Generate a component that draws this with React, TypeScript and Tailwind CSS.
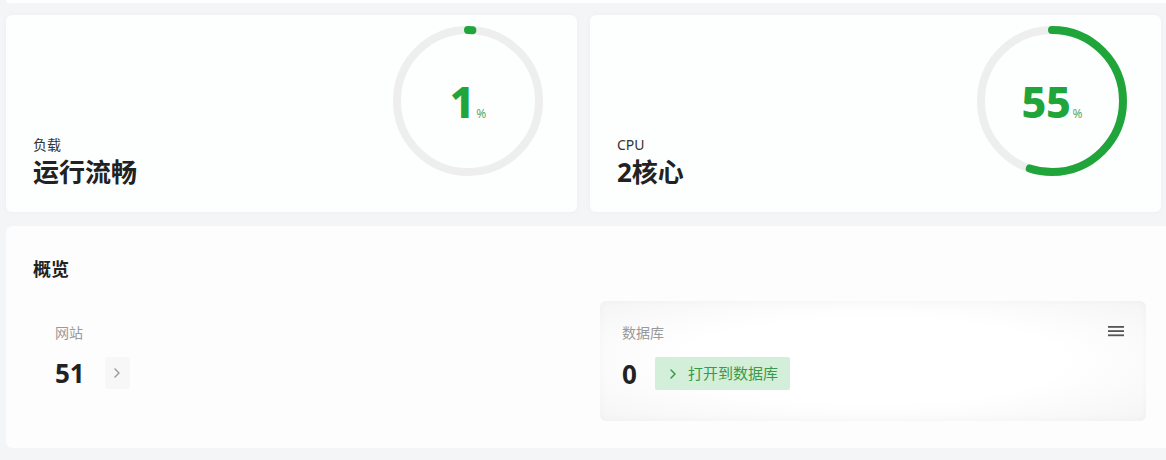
import React from "react";

const GREEN = "#20a53a";

function Ring({ value }: { value: number }) {
  const r = 71;
  const c = 2 * Math.PI * r;
  const len = Math.max((value / 100) * c, 0.01);
  return (
    <div className="relative h-[150px] w-[150px] shrink-0">
      <svg width="150" height="150" viewBox="0 0 150 150" className="-rotate-90">
        <circle cx="75" cy="75" r={r} fill="none" stroke="#eeeeee" strokeWidth="8" />
        <circle
          cx="75"
          cy="75"
          r={r}
          fill="none"
          stroke={GREEN}
          strokeWidth="8"
          strokeLinecap="round"
          strokeDasharray={`${len} ${c}`}
        />
      </svg>
      <div className="absolute inset-0 flex items-center justify-center">
        <span className="flex items-baseline">
          <span className="text-[43px] font-extrabold leading-none tracking-[-0.3px] text-[#20a53a]">{value}</span>
          <span className="ml-[2px] text-[12px] leading-none text-[#5aa868]">%</span>
        </span>
      </div>
    </div>
  );
}

function StatCard({ label, title, value }: { label: string; title: string; value: number }) {
  return (
    <div className="flex h-[197px] items-start justify-between rounded-[6px] bg-[#fdfefe] pl-[27px] pr-[34px] pt-[11px] shadow-[0_0_6px_rgba(0,0,0,0.03)]">
      <div className="flex h-full flex-col justify-end pb-[23px]">
        <div className="text-[14px] leading-[20px] text-[#333]">{label}</div>
        <div className="text-[26px] font-bold leading-[34px] text-[#222]">{title}</div>
      </div>
      <Ring value={value} />
    </div>
  );
}

export default function App() {
  return (
    <div
      className="h-[460px] w-[1166px] overflow-hidden bg-[#f4f5f6]"
      style={{ fontFamily: '"Noto Sans", "Noto Sans CJK SC", sans-serif' }}
    >
      <div className="ml-[6px] h-[3px] w-[1180px] rounded-b-[6px] bg-[#fdfefe]" />
      <div className="ml-[6px] mt-[12px] grid w-[1155px] grid-cols-2 gap-[13px]">
        <StatCard label="负载" title="运行流畅" value={1} />
        <StatCard label="CPU" title="2核心" value={55} />
      </div>
      <div className="ml-[6px] mt-[14px] h-[222px] w-[1180px] rounded-[6px] bg-[#fdfdfd] pl-[27px] pt-[30px]">
        <div className="text-[18px] font-bold leading-[26px] text-[#222]">概览</div>
        <div className="mt-[19px] grid w-[1113px] grid-cols-[554px_546px] gap-[13px]">
          <div className="h-[120px] px-[22px] pt-[22px]">
            <div className="text-[14px] leading-[20px] text-[#999]">网站</div>
            <div className="mt-[14px] flex items-center gap-[20px]">
              <span className="text-[26px] font-bold leading-[32px] text-[#222]">51</span>
              <span className="flex h-[32px] w-[25px] items-center justify-center rounded-[2px] bg-[#f7f7f7]">
                <svg width="10" height="12" viewBox="0 0 10 12" fill="none">
                  <path d="M3 2l4 4-4 4" stroke="#999" strokeWidth="1.4" strokeLinecap="round" strokeLinejoin="round" />
                </svg>
              </span>
            </div>
          </div>
          <div className="h-[120px] rounded-[6px] bg-[radial-gradient(ellipse_at_center,#ffffff_50%,#f5f5f5_100%)] px-[22px] pt-[22px] shadow-[inset_0_0_8px_rgba(0,0,0,0.03)]">
            <div className="flex items-center justify-between">
              <div className="text-[14px] leading-[20px] text-[#999]">数据库</div>
              <svg width="16" height="12" viewBox="0 0 16 12" className="-mt-[4px]">
                <rect x="0" y="1" width="16" height="1.8" fill="#555" />
                <rect x="0" y="5.2" width="16" height="1.8" fill="#555" />
                <rect x="0" y="9.4" width="16" height="1.8" fill="#555" />
              </svg>
            </div>
            <div className="mt-[14px] flex items-center gap-[18px]">
              <span className="text-[26px] font-bold leading-[32px] text-[#222]">0</span>
              <span className="flex h-[33px] items-center gap-[11px] rounded-[2px] bg-[#d3eed9] pl-[14px] pr-[12px] text-[15px] text-[#3a9a4a]">
                <svg width="8" height="12" viewBox="0 0 8 12" fill="none">
                  <path d="M2 2l4 4-4 4" stroke="#3a9a4a" strokeWidth="1.5" strokeLinecap="round" strokeLinejoin="round" />
                </svg>
                打开到数据库
              </span>
            </div>
          </div>
        </div>
      </div>
    </div>
  );
}
